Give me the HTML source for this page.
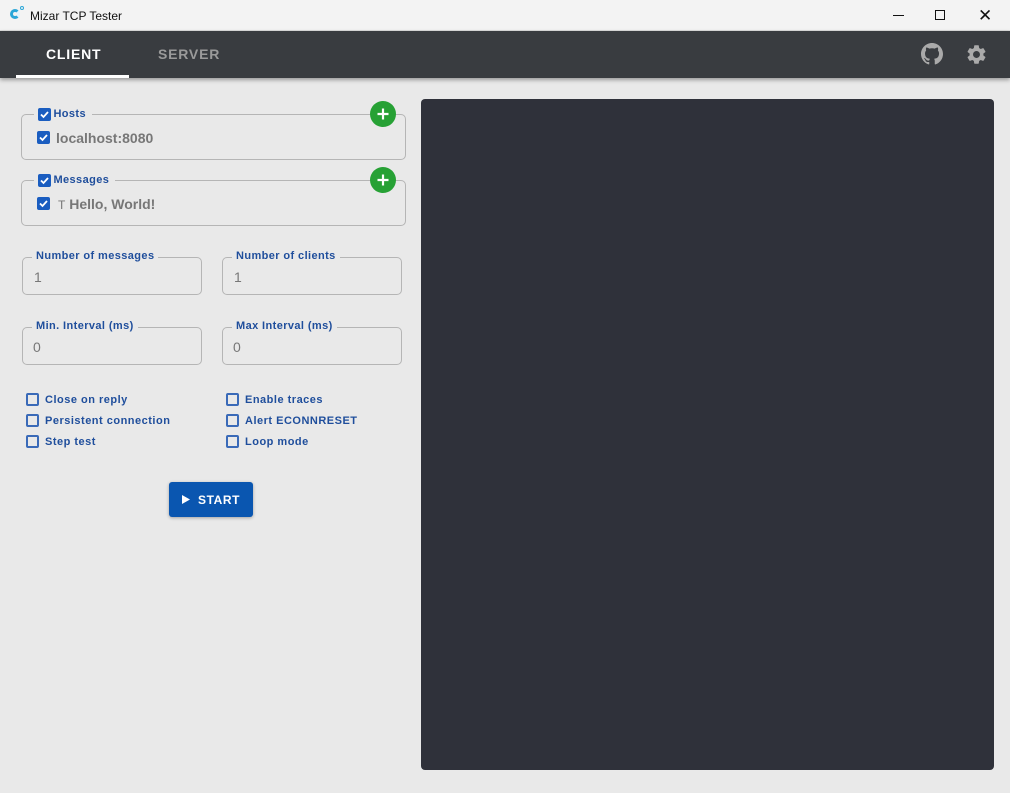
<!DOCTYPE html>
<html><head><style>
*{box-sizing:border-box;margin:0;padding:0}
body{width:1010px;height:793px;background:#e9e9e9;font-family:"Liberation Sans",sans-serif;position:relative;overflow:hidden}
.abs{position:absolute}
.title{left:0;top:0;width:1010px;height:31px;background:#f3f3f3;border-bottom:1px solid #ddd}
.bar{left:0;top:31px;width:1010px;height:47px;background:#393c40;box-shadow:0 2px 4px rgba(0,0,0,.35)}
.box{border:1px solid #b5b5b5;border-radius:5px}
.lbl{color:#1f4e9c;font-weight:bold;font-size:11px;background:#e9e9e9;padding:0 4px;letter-spacing:.4px}
.cb{width:13px;height:13px;background:#1a5dc0;border-radius:2px}
.cb svg{display:block}
.ecb{width:13px;height:13px;border:2px solid #3a6ab8;border-radius:2px}
.plus{width:26px;height:26px;border-radius:50%;background:#27a135}
.val{color:#777;font-size:14px}
.opt{color:#1f4e9c;font-size:11px;font-weight:bold;letter-spacing:.5px}
</style></head><body>
<div class="abs title"></div>
<div class="abs" style="left:10px;top:9px;width:10px;height:10px;border-radius:50%;border:3px solid #2aa6d8;border-right-color:#e0f4ff"></div>
<div class="abs" style="left:20px;top:6px;width:4px;height:4px;border-radius:50%;border:1px solid #2aa6d8"></div>
<div class="abs" style="left:30px;top:9px;font-size:12px;color:#111">Mizar TCP Tester</div>
<div class="abs" style="left:893px;top:15px;width:11px;height:1px;background:#111"></div>
<div class="abs" style="left:935px;top:10px;width:10px;height:10px;border:1px solid #111"></div>
<div class="abs" style="left:978px;top:6px;font-size:17px;color:#111">✕</div>
<div class="abs bar"></div>
<div class="abs" style="left:46px;top:46px;color:#fff;font-weight:bold;font-size:14px;letter-spacing:.8px">CLIENT</div>
<div class="abs" style="left:16px;top:75px;width:113px;height:3px;background:#fff"></div>
<div class="abs" style="left:158px;top:46px;color:#9a9a9a;font-weight:bold;font-size:14px;letter-spacing:.8px">SERVER</div>
<svg class="abs" style="left:921px;top:43px" width="22" height="22" viewBox="0 0 16 16"><path fill="#aaa" d="M8 0C3.58 0 0 3.58 0 8c0 3.540 2.29 6.53 5.47 7.59.4.07.55-.17.55-.38 0-.19-.01-.82-.01-1.49-2.010.37-2.53-.49-2.69-.94-.09-.23-.48-.94-.82-1.13-.28-.15-.68-.52-.01-.53.63-.01 1.08.58 1.23.82.72 1.21 1.87.87 2.33.66.07-.52.28-.87.51-1.07-1.78-.2-3.64-.89-3.64-3.95 0-.87.31-1.59.82-2.15-.08-.2-.36-1.02.08-2.12 0 0 .67-.21 2.2.82.64-.18 1.32-.27 2-.27.68 0 1.36.09 2 .27 1.53-1.04 2.2-.82 2.2-.82.44 1.1.16 1.92.08 2.12.51.56.82 1.27.82 2.15 0 3.07-1.87 3.75-3.65 3.95.29.25.54.73.54 1.48 0 1.07-.01 1.93-.01 2.2 0 .21.15.46.55.38A8.013 8.013 0 0016 8c0-4.42-3.58-8-8-8z"/></svg>
<svg class="abs" style="left:965px;top:43px" width="23" height="23" viewBox="0 0 24 24"><path fill="#aaa" d="M19.14 12.94c.04-.3.06-.61.06-.94 0-.32-.02-.64-.07-.94l2.03-1.58a.49.49 0 00.12-.61l-1.920-3.32a.488.488 0 00-.59-.22l-2.39.96c-.5-.38-1.03-.7-1.62-.94l-.36-2.54a.484.484 0 00-.48-.41h-3.84c-.24 0-.43.17-.47.41l-.36 2.540c-.59.24-1.13.57-1.62.94l-2.39-.96c-.22-.08-.47 0-.59.22L2.74 8.87c-.12.21-.08.47.12.61l2.03 1.58c-.05.3-.09.63-.09.94s.02.64.07.94l-2.03 1.58a.49.49 0 00-.12.61l1.92 3.32c.12.22.37.29.59.22l2.39-.96c.5.38 1.03.7 1.62.94l.36 2.54c.05.24.24.41.48.41h3.84c.24 0 .44-.17.47-.41l.36-2.54c.59-.24 1.13-.56 1.62-.94l2.39.96c.22.08.47 0 .59-.22l1.92-3.32c.12-.22.07-.47-.12-.61l-2.01-1.58zM12 15.6c-1.98 0-3.6-1.62-3.6-3.6s1.62-3.6 3.6-3.6 3.6 1.62 3.6 3.6-1.62 3.6-3.6 3.6z"/></svg>

<div class="abs" style="left:421px;top:99px;width:573px;height:671px;background:#2f313a;border-radius:4px"></div>

<!-- Hosts -->
<div class="abs box" style="left:21px;top:114px;width:385px;height:46px"></div>
<div class="abs lbl" style="left:34px;top:108px;padding-left:3px;padding-right:6px"><span style="display:inline-block;width:13px"></span> Hosts</div>
<div class="abs cb" style="left:38px;top:108px"><svg width="13" height="13"><path d="M3 6.5l2.5 2.5 4.5-5" stroke="#fff" stroke-width="1.8" fill="none"/></svg></div>
<div class="abs cb" style="left:37px;top:131px"><svg width="13" height="13"><path d="M3 6.5l2.5 2.5 4.5-5" stroke="#fff" stroke-width="1.8" fill="none"/></svg></div>
<div class="abs val" style="left:56px;top:130px;font-weight:bold">localhost:8080</div>
<svg class="abs plus" style="left:370px;top:101px" width="26" height="26"><path d="M13 7.5v11M7.5 13h11" stroke="#fff" stroke-width="2.2"/></svg>

<!-- Messages -->
<div class="abs box" style="left:21px;top:180px;width:385px;height:46px"></div>
<div class="abs lbl" style="left:34px;top:174px;padding-left:3px;padding-right:6px"><span style="display:inline-block;width:13px"></span> Messages</div>
<div class="abs cb" style="left:38px;top:174px"><svg width="13" height="13"><path d="M3 6.5l2.5 2.5 4.5-5" stroke="#fff" stroke-width="1.8" fill="none"/></svg></div>
<div class="abs cb" style="left:37px;top:197px"><svg width="13" height="13"><path d="M3 6.5l2.5 2.5 4.5-5" stroke="#fff" stroke-width="1.8" fill="none"/></svg></div>
<div class="abs val" style="left:58px;top:196px;font-weight:bold"><span style="font-weight:normal;font-size:12px">T</span> Hello, World!</div>
<svg class="abs plus" style="left:370px;top:167px" width="26" height="26"><path d="M13 7.5v11M7.5 13h11" stroke="#fff" stroke-width="2.2"/></svg>

<!-- text fields -->
<div class="abs box" style="left:22px;top:257px;width:180px;height:38px"></div>
<div class="abs lbl" style="left:32px;top:250px">Number of messages</div>
<div class="abs val" style="left:34px;top:269px">1</div>
<div class="abs box" style="left:222px;top:257px;width:180px;height:38px"></div>
<div class="abs lbl" style="left:232px;top:250px">Number of clients</div>
<div class="abs val" style="left:234px;top:269px">1</div>
<div class="abs box" style="left:22px;top:327px;width:180px;height:38px"></div>
<div class="abs lbl" style="left:32px;top:320px">Min. Interval (ms)</div>
<div class="abs val" style="left:33px;top:339px">0</div>
<div class="abs box" style="left:222px;top:327px;width:180px;height:38px"></div>
<div class="abs lbl" style="left:232px;top:320px">Max Interval (ms)</div>
<div class="abs val" style="left:233px;top:339px">0</div>

<!-- options -->
<div class="abs ecb" style="left:26px;top:393px"></div><div class="abs opt" style="left:45px;top:394px">Close on reply</div>
<div class="abs ecb" style="left:26px;top:414px"></div><div class="abs opt" style="left:45px;top:415px">Persistent connection</div>
<div class="abs ecb" style="left:26px;top:435px"></div><div class="abs opt" style="left:45px;top:436px">Step test</div>
<div class="abs ecb" style="left:226px;top:393px"></div><div class="abs opt" style="left:245px;top:394px">Enable traces</div>
<div class="abs ecb" style="left:226px;top:414px"></div><div class="abs opt" style="left:245px;top:415px">Alert ECONNRESET</div>
<div class="abs ecb" style="left:226px;top:435px"></div><div class="abs opt" style="left:245px;top:436px">Loop mode</div>

<div class="abs" style="left:169px;top:482px;width:84px;height:35px;background:#0a56b0;border-radius:3px;box-shadow:0 1px 3px rgba(0,0,0,.3)"></div>
<svg class="abs" style="left:182px;top:495px" width="8" height="9"><path d="M0 0L8 4.5L0 9z" fill="#fff"/></svg>
<div class="abs" style="left:198px;top:493px;color:#fff;font-size:12px;font-weight:bold;letter-spacing:.6px">START</div>
</body></html>
